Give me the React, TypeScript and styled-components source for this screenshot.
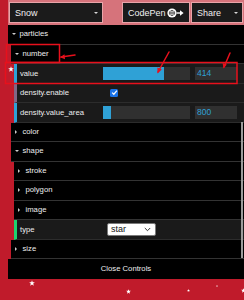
import React from 'react'
import type { ReactElement, ReactNode } from 'react'
import styled, { createGlobalStyle, css } from 'styled-components'

const GlobalStyle = createGlobalStyle`
  html, body {
    margin: 0;
    padding: 0;
    background: #c01b2b;
  }
  body {
    font-family: "Liberation Sans", Arial, sans-serif;
  }
`

const Page = styled.div`
  position: relative;
  width: 244px;
  height: 300px;
  overflow: hidden;
  background: #c01b2b;
`

const Panel = styled.div`
  margin-left: 8px;
  width: 236px;
`

const TopBar = styled.div`
  height: 25px;
  background: #d6737b;
  display: flex;
  align-items: center;
  padding: 0 1px;
  box-sizing: border-box;
`

interface BarButtonProps {
  $width: number
  $gap?: number
}

const BarButton = styled.div<BarButtonProps>`
  width: ${({ $width }) => $width}px;
  height: 21px;
  margin-right: ${({ $gap }) => $gap ?? 0}px;
  box-sizing: border-box;
  border: 1px solid #e9a4a9;
  background: #1b1b1b;
  color: #f0f0f0;
  font-size: 9px;
  display: flex;
  align-items: center;
  justify-content: space-between;
  padding: 0 4px 0 5px;
`

const Caret = styled.span`
  width: 0;
  height: 0;
  border-left: 2px solid transparent;
  border-right: 2px solid transparent;
  border-top: 2.5px solid #d8d8d8;
`

const GuiList = styled.ul`
  margin: 0;
  padding: 0;
  list-style: none;
`

const FolderItem = styled.li`
  list-style: none;
  border-left: 3px solid transparent;
`

interface TitleProps {
  $open: boolean
}

const Title = styled.li<TitleProps>`
  position: relative;
  margin-left: -3px;
  height: 18.5px;
  line-height: 18.5px;
  background: #000;
  border-bottom: 1px solid #333;
  color: #eee;
  font-size: 7.7px;
  padding-left: 11.5px;
  &::before {
    content: '';
    position: absolute;
    left: 4px;
    top: 8px;
    width: 0;
    height: 0;
    ${({ $open }) =>
      $open
        ? css`
            border-left: 2px solid transparent;
            border-right: 2px solid transparent;
            border-top: 2.5px solid #ccc;
          `
        : css`
            top: 7px;
            border-top: 2px solid transparent;
            border-bottom: 2px solid transparent;
            border-left: 2.5px solid #ccc;
          `}
  }
`

interface RowProps {
  $accent: string
}

const Row = styled.li<RowProps>`
  list-style: none;
  display: flex;
  align-items: center;
  height: 18.5px;
  background: #1a1a1a;
  border-bottom: 1px solid #2c2c2c;
  border-left: 3px solid ${({ $accent }) => $accent};
  padding: 0 7px 0 3px;
  color: #eee;
  font-size: 7.7px;
`

const Name = styled.span`
  width: 83px;
  flex-shrink: 0;
  white-space: nowrap;
`

const Slider = styled.div`
  width: 87px;
  height: 13px;
  background: #303030;
  display: flex;
`

const SliderFill = styled.div`
  height: 100%;
  background: #2fa1d6;
`

const NumberBox = styled.div`
  width: 42px;
  height: 13px;
  margin-left: 5px;
  background: #303030;
  color: #2fa1d6;
  font-size: 8.5px;
  line-height: 13px;
  padding-left: 2px;
  box-sizing: border-box;
`

const Checkbox = styled.div`
  width: 8px;
  height: 8px;
  margin-left: 7px;
  border-radius: 1.5px;
  background: #1a73e8;
  display: flex;
  align-items: center;
  justify-content: center;
`

const SelectBox = styled.div`
  width: 49px;
  height: 13px;
  margin-left: 4px;
  box-sizing: border-box;
  background: #fff;
  border: 1px solid #7a7a7a;
  border-radius: 2px;
  color: #111;
  font-size: 9px;
  display: flex;
  align-items: center;
  justify-content: space-between;
  padding: 0 4px 0 3px;
`

const CloseButton = styled.div`
  height: 20px;
  line-height: 20px;
  background: #000;
  color: #eee;
  font-size: 7.7px;
  text-align: center;
`

const Overlay = styled.svg`
  position: absolute;
  left: 0;
  top: 0;
  pointer-events: none;
`

interface StarProps {
  $x: number
  $y: number
}

const StarMark = styled.svg<StarProps>`
  position: absolute;
  left: ${({ $x }) => $x}px;
  top: ${({ $y }) => $y}px;
  pointer-events: none;
`

const ScrollTrack = styled.div`
  position: absolute;
  left: 241px;
  top: 122px;
  width: 2px;
  height: 136px;
  background: #9c9c9c;
`

const Star = ({ x, y, size }: { x: number; y: number; size: number }): ReactElement => (
  <StarMark $x={x - size / 2} $y={y - size / 2} width={size} height={size} viewBox="0 0 10 10">
    <polygon
      points="5,0.3 6.2,3.6 9.8,3.7 7,5.9 8,9.5 5,7.4 2,9.5 3,5.9 0.2,3.7 3.8,3.6"
      fill="#fff"
    />
  </StarMark>
)

const Folder = ({
  title,
  open = false,
  children,
}: {
  title: string
  open?: boolean
  children?: ReactNode
}): ReactElement => (
  <FolderItem>
    <GuiList>
      <Title $open={open}>{title}</Title>
      {open && children}
    </GuiList>
  </FolderItem>
)

const NumberRow = ({ name, value, pct }: { name: string; value: number; pct: number }): ReactElement => (
  <Row $accent="#2fa1d6">
    <Name>{name}</Name>
    <Slider>
      <SliderFill style={{ width: `${pct * 100}%` }} />
    </Slider>
    <NumberBox>{value}</NumberBox>
  </Row>
)

const CodePenIcon = (): ReactElement => (
  <svg width="18" height="10" viewBox="0 0 18 10">
    <circle cx="5" cy="5" r="4.6" fill="#fff" />
    <path d="M5 2.2 L7.6 3.9 L7.6 6.1 L5 7.8 L2.4 6.1 L2.4 3.9 Z M2.4 3.9 L5 5.6 L7.6 3.9 M5 2.2 V4 M2.4 6.1 L5 4.4 L7.6 6.1 M5 7.8 V6" fill="none" stroke="#1b1b1b" strokeWidth="0.6" />
    <path d="M9.5 5 H13.5" stroke="#fff" strokeWidth="1.4" />
    <path d="M13 2.2 L16.6 5 L13 7.8 Z" fill="#fff" />
  </svg>
)

export default function App(): ReactElement {
  return (
    <Page>
      <GlobalStyle />
      <Panel>
        <TopBar>
          <BarButton $width={94} $gap={19}>
            <span>Snow</span>
            <Caret />
          </BarButton>
          <BarButton $width={68} $gap={1}>
            <span>CodePen</span>
            <CodePenIcon />
          </BarButton>
          <BarButton $width={52}>
            <span>Share</span>
            <Caret />
          </BarButton>
        </TopBar>
        <GuiList>
          <Folder title="particles" open>
            <Folder title="number" open>
              <NumberRow name="value" value={414} pct={0.7} />
              <Row $accent="#806787">
                <Name>density.enable</Name>
                <Checkbox>
                  <svg width="7" height="7" viewBox="0 0 8 8">
                    <path d="M1.3 4.2 L3.2 6 L6.8 1.8" fill="none" stroke="#fff" strokeWidth="1.4" />
                  </svg>
                </Checkbox>
              </Row>
              <NumberRow name="density.value_area" value={800} pct={0.09} />
            </Folder>
            <Folder title="color" />
            <Folder title="shape" open>
              <Folder title="stroke" />
              <Folder title="polygon" />
              <Folder title="image" />
              <Row $accent="#1ed36f">
                <Name>type</Name>
                <SelectBox>
                  <span>star</span>
                  <svg width="7" height="5" viewBox="0 0 7 5">
                    <path d="M0.8 1 L3.5 3.7 L6.2 1" fill="none" stroke="#333" strokeWidth="1" />
                  </svg>
                </SelectBox>
              </Row>
            </Folder>
            <Folder title="size" />
          </Folder>
        </GuiList>
        <CloseButton>Close Controls</CloseButton>
      </Panel>

      <ScrollTrack />

      <Star x={11} y={69} size={6} />
      <Star x={32} y={283} size={6} />
      <Star x={128} y={291} size={5} />
      <Star x={188} y={290} size={3} />
      <Star x={217} y={286} size={2} />
      <Star x={243} y={290} size={5} />

      <Overlay width={244} height={300} viewBox="0 0 244 300">
        <g fill="none" stroke="#e8101c" strokeWidth="1.5" strokeLinecap="round">
          <rect x="6.5" y="44.5" width="53" height="18" />
          <path d="M75 55 L61 57" />
          <rect x="5.5" y="62.5" width="231.5" height="21" />
          <path d="M169 52 L158 72" />
          <path d="M230 53 L224 67" />
        </g>
        <g fill="#e8101c">
          <path d="M60 57.2 L64.5 54.3 L65 59.2 Z" />
          <path d="M157.5 73.5 L157.4 67.5 L161.8 69.6 Z" />
          <path d="M223.5 68.5 L222.6 63 L226.8 64.6 Z" />
        </g>
      </Overlay>
    </Page>
  )
}
